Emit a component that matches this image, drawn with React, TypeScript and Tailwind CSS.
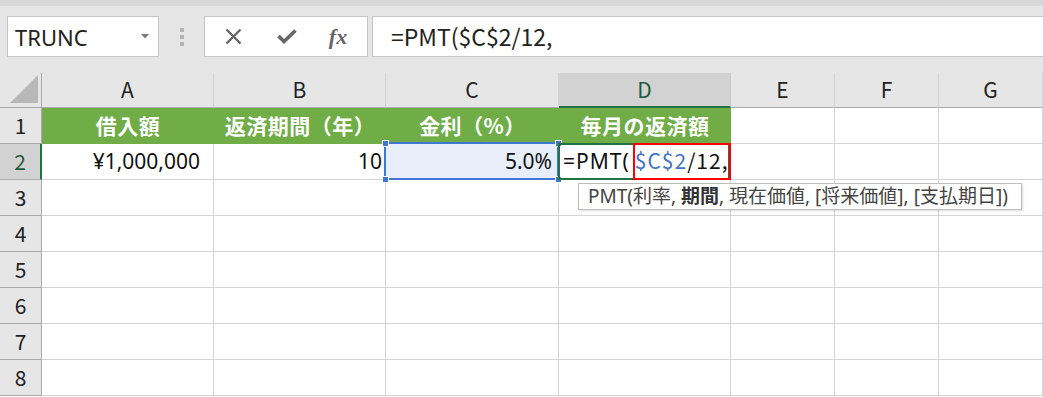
import React from "react";

const cols = ["A", "B", "C", "D", "E", "F", "G"];
const rows = [1, 2, 3, 4, 5, 6, 7, 8];

const jp = { fontFamily: '"Noto Sans CJK JP", "Noto Sans", sans-serif' };
const mixed = { fontFamily: '"Noto Sans", "Noto Sans CJK JP", sans-serif' };

function Toolbar() {
  return (
    <div className="h-[67px] bg-[#e6e6e6] flex items-start pt-[10px] pl-[7px]">
      {/* name box */}
      <div className="w-[152px] h-[41px] bg-white border border-[#c6c6c6] flex items-center justify-between pl-[7px] pr-[9px]">
        <span className="text-[22px] text-[#222] leading-none" style={{ fontFamily: '"Noto Sans", sans-serif' }}>
          TRUNC
        </span>
        <svg width="8" height="5" viewBox="0 0 8 5">
          <path d="M0 0 L8 0 L4 4.5 Z" fill="#7a7a7a" />
        </svg>
      </div>
      {/* grip */}
      <div className="w-[45px] h-[41px] flex flex-col items-center justify-center gap-[3px]">
        <span className="w-[4px] h-[4px] bg-[#b4b4b4]" />
        <span className="w-[4px] h-[4px] bg-[#b4b4b4]" />
        <span className="w-[4px] h-[4px] bg-[#b4b4b4]" />
      </div>
      {/* buttons */}
      <div className="w-[164px] h-[41px] bg-white border border-[#c6c6c6] flex items-center">
        <div className="w-[56px] flex justify-center">
          <svg width="17" height="17" viewBox="0 0 17 17">
            <path d="M1.5 1.5 L15.5 15.5 M15.5 1.5 L1.5 15.5" stroke="#666" strokeWidth="2.4" />
          </svg>
        </div>
        <div className="w-[52px] flex justify-center">
          <svg width="20" height="15" viewBox="0 0 20 15">
            <path d="M1.5 7 L7 12.5 L18.5 1.5" stroke="#666" strokeWidth="3.6" fill="none" />
          </svg>
        </div>
        <div className="flex-1 flex justify-center pr-[4px]">
          <span className="italic font-bold text-[22px] text-[#666] leading-none" style={{ fontFamily: '"Liberation Serif", serif' }}>
            fx
          </span>
        </div>
      </div>
      {/* formula box */}
      <div className="flex-1 ml-[4px] h-[41px] bg-white border border-[#c6c6c6] border-r-0 flex items-center pl-[18px]">
        <span className="text-[23px] text-[#222] leading-none" style={jp}>
          =PMT($C$2/12,
        </span>
      </div>
    </div>
  );
}

function Sheet() {
  const headers = ["借入額", "返済期間（年）", "金利（%）", "毎月の返済額"];
  return (
    <div className="grid grid-cols-[42px_172px_172px_173px_172px_104px_104px_1fr] grid-rows-[35px_repeat(8,36px)]" style={mixed}>
      {/* corner */}
      <div className="bg-[#e6e6e6] border-r border-b border-[#ababab] flex items-end justify-end pr-[3px] pb-[4px]">
        <svg width="28" height="28" viewBox="0 0 28 28">
          <path d="M28 0 L28 28 L0 28 Z" fill="#b8b8b8" />
        </svg>
      </div>
      {cols.map((c) =>
        c === "D" ? (
          <div key={c} className="bg-[#d2d2d2] border-r border-[#c8c8c8] border-b-2 border-b-[#217346] flex items-center justify-center text-[21px] text-[#1f5a37]" style={jp}>
            {c}
          </div>
        ) : (
          <div key={c} className="bg-[#e6e6e6] border-r border-[#d4d4d4] border-b border-b-[#ababab] flex items-center justify-center text-[21px] text-[#222]" style={jp}>
            {c}
          </div>
        )
      )}
      {rows.map((r) => (
        <React.Fragment key={r}>
          {r === 2 ? (
            <div className="bg-[#d2d2d2] border-r-2 border-r-[#217346] border-b border-b-[#ababab] flex items-center justify-center text-[21px] text-[#1f5a37]" style={jp}>
              {r}
            </div>
          ) : (
            <div className="bg-[#e6e6e6] border-r border-b border-[#ababab] flex items-center justify-center text-[21px] text-[#222]" style={jp}>
              {r}
            </div>
          )}
          {cols.map((c, i) => {
            if (r === 1 && i < 4) {
              return (
                <div key={c} className="bg-[#70ad47] border-b border-[#70ad47] flex items-center justify-center text-[21px] font-bold text-white tracking-[0.5px]" style={jp}>
                  {headers[i]}
                </div>
              );
            }
            if (r === 2 && c === "A") {
              return (
                <div key={c} className="border-r border-b border-[#d4d4d4] flex items-center justify-end pr-[13px] text-[21px] text-[#111]">
                  ¥1,000,000
                </div>
              );
            }
            if (r === 2 && c === "B") {
              return (
                <div key={c} className="border-r border-b border-[#d4d4d4] flex items-center justify-end pr-[3px] text-[21px] text-[#111]">
                  10
                </div>
              );
            }
            if (r === 2 && c === "C") {
              return (
                <div key={c} className="relative bg-[#e8eef9] border-r border-b border-[#d4d4d4] flex items-center justify-end pr-[6px] text-[21px] text-[#111]">
                  5.0%
                  <div className="absolute -left-[2px] -top-[2px] -right-[1px] -bottom-[1px] border-2 border-[#3f78d3]" />
                  <span className="absolute -left-[4px] -top-[4px] w-[7px] h-[7px] bg-[#3f78d3] border border-white" />
                  <span className="absolute -right-[4px] -top-[4px] w-[7px] h-[7px] bg-[#3f78d3] border border-white" />
                  <span className="absolute -left-[4px] -bottom-[4px] w-[7px] h-[7px] bg-[#3f78d3] border border-white" />
                  <span className="absolute -right-[4px] -bottom-[4px] w-[7px] h-[7px] bg-[#3f78d3] border border-white" />
                </div>
              );
            }
            if (r === 2 && c === "D") {
              return (
                <div key={c} className="relative z-10 border-r border-b border-[#d4d4d4] flex items-center pl-[4px] text-[21px] text-[#111] whitespace-nowrap tracking-[1px]" style={jp}>
                  <div className="absolute -left-[1px] -top-[1px] right-0 -bottom-[1px] border-2 border-[#217346]" />
                  <span className="relative">
                    <span className="mr-[5px]" style={mixed}>=PMT(</span>
                    <span className="text-[#4472c4]">$C$2</span>/12,
                  </span>
                  <div className="absolute left-[74px] -top-[1px] -right-[1px] -bottom-[1px] border-2 border-[#ff0000]" />
                  <div className="absolute left-[19px] top-[39px] h-[27px] pl-[9px] pr-[13px] bg-white border border-[#bdbdbd] shadow-[1px_1px_2px_rgba(0,0,0,0.15)] flex items-center text-[19px] text-[#444] whitespace-pre tracking-normal" style={mixed}>
                    {"PMT(利率, "}
                    <b className="font-bold text-[#333]">期間</b>
                    {", 現在価値, [将来価値], [支払期日])"}
                  </div>
                </div>
              );
            }
            return <div key={c} className="border-r border-b border-[#d4d4d4] bg-white" />;
          })}
        </React.Fragment>
      ))}
    </div>
  );
}

export default function App() {
  return (
    <div className="w-[1043px] h-[397px] overflow-hidden bg-white">
      <div className="h-[6px] bg-[#d8d8d8]" />
      <Toolbar />
      <Sheet />
    </div>
  );
}
